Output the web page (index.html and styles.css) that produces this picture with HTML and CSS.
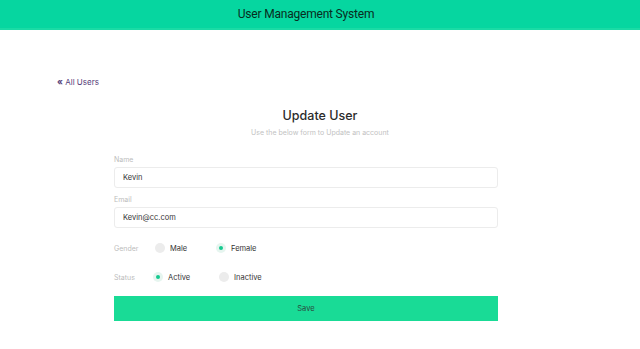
FILE: index.html
```html
<!DOCTYPE html>
<html lang="en">
<head>
    <meta charset="utf-8">
    <title>User Management System</title>
    <link rel="stylesheet" href="styles.css">
</head>
<body>
    <header class="topbar">
        <h1>User Management System</h1>
    </header>

    <main class="page">
        <a class="back" href="#"><span class="chev">&laquo;</span> All Users</a>

        <div class="heading">
            <h2>Update User</h2>
            <p>Use the below form to Update an account</p>
        </div>

        <form class="user-form">
            <label class="lbl">Name</label>
            <div class="field">Kevin</div>

            <label class="lbl">Email</label>
            <div class="field">Kevin@cc.com</div>

            <div class="radio-row gender">
                <span class="lbl">Gender</span>
                <span class="opt"><span class="dot"></span>Male</span>
                <span class="opt"><span class="dot on"></span>Female</span>
            </div>

            <div class="radio-row status">
                <span class="lbl">Status</span>
                <span class="opt"><span class="dot on"></span>Active</span>
                <span class="opt"><span class="dot"></span>Inactive</span>
            </div>

            <button type="button" class="save">Save</button>
        </form>
    </main>
</body>
</html>
```

FILE: styles.css
```css
* {
    box-sizing: border-box;
}

body {
    margin: 0;
    background-color: #fff;
    font-family: "Inter", "Roboto", sans-serif;
    color: #333;
}

.topbar {
    background-color: #06d6a0;
    height: 30px;
    border-bottom: 2px solid #1adba5;
    display: flex;
    align-items: center;
    justify-content: center;
    padding-right: 28px;
}

.topbar h1 {
    margin: 0;
    font-family: "Roboto", sans-serif;
    font-size: 12px;
    font-weight: 400;
    color: #082c20;
    letter-spacing: -0.2px;
}

.page {
    padding: 46px 57px 0 57px;
}

.back {
    display: block;
    font-size: 8px;
    color: #55407a;
    text-decoration: none;
    height: 12px;
}

.chev {
    font-weight: 700;
    font-size: 9px;
}

.heading {
    text-align: center;
    margin-top: 20px;
}

.heading h2 {
    margin: 0;
    font-size: 12.5px;
    font-weight: 500;
    color: #2b2b2b;
}

.heading p {
    margin: 5px 0 0 0;
    font-size: 7px;
    color: #c2c2c2;
}

.user-form {
    width: 384px;
    margin: 18px 0 0 57px;
}

.lbl {
    display: block;
    font-size: 7px;
    color: #bcbcbc;
}

.field {
    height: 21px;
    border: 1px solid #ececec;
    border-radius: 3px;
    margin: 3px 0 7px 0;
    padding: 0 8px;
    font-size: 7.5px;
    color: #333;
    display: flex;
    align-items: center;
}

.radio-row {
    display: flex;
    align-items: center;
    height: 14px;
    font-size: 7.5px;
    color: #333;
}

.radio-row .lbl {
    width: 41px;
}

.gender {
    margin-top: 13px;
}

.status {
    margin-top: 15px;
}

.opt {
    display: flex;
    align-items: center;
    width: 61px;
}

.status .lbl {
    width: 39px;
}

.status .opt {
    width: 66px;
}

.dot {
    width: 10px;
    height: 10px;
    border-radius: 50%;
    background-color: #ececec;
    margin-right: 5px;
    display: flex;
    align-items: center;
    justify-content: center;
}

.dot.on {
    background-color: #e6f5ef;
}

.dot.on::after {
    content: "";
    width: 4px;
    height: 4px;
    border-radius: 50%;
    background-color: #16c98f;
}

.save {
    display: block;
    width: 100%;
    height: 25px;
    margin-top: 12px;
    border: none;
    background-color: #19db96;
    color: #2b4a3e;
    font-family: "Inter", "Roboto", sans-serif;
    font-size: 7.5px;
    cursor: pointer;
}
```
